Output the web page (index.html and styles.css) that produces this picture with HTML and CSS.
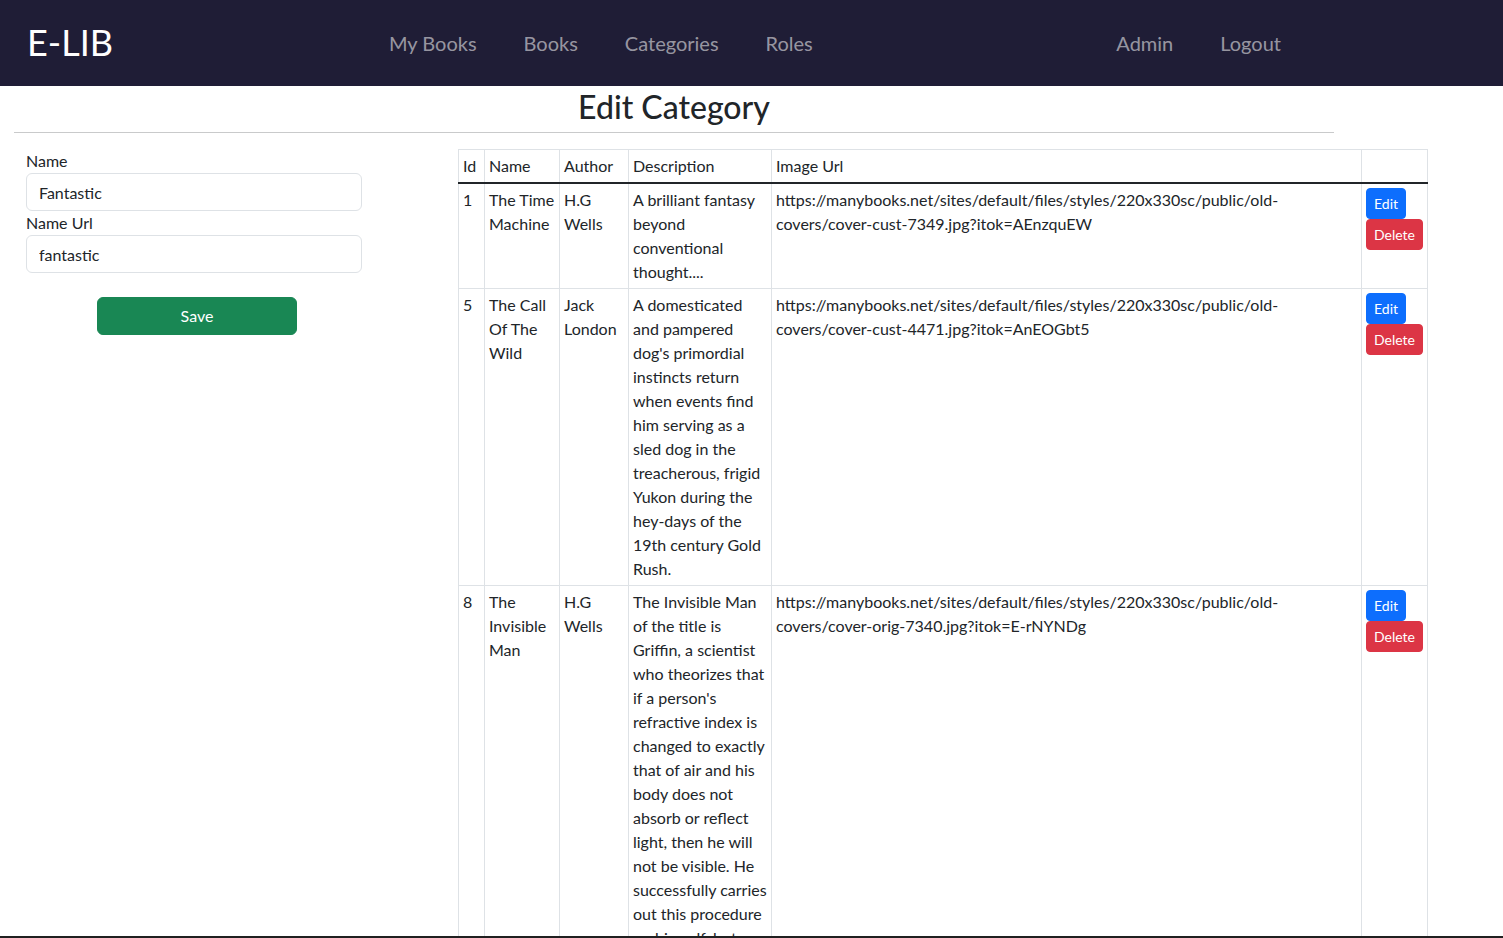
FILE: index.html
```html
<!DOCTYPE html>
<html lang="en">
<head>
<meta charset="utf-8">
<title>E-LIB - Edit Category</title>
<link rel="stylesheet" href="styles.css">
</head>
<body>
<header class="navbar">
  <a class="brand" href="#">E-LIB</a>
  <nav class="nav-main">
    <a class="nav-link" href="#">My Books</a>
    <a class="nav-link" href="#">Books</a>
    <a class="nav-link" href="#">Categories</a>
    <a class="nav-link" href="#">Roles</a>
  </nav>
  <nav class="nav-user">
    <a class="nav-link" href="#">Admin</a>
    <a class="nav-link" href="#">Logout</a>
  </nav>
</header>

<main class="page">
  <div class="title-block">
    <h2 class="title">Edit Category</h2>
    <hr class="divider">
  </div>

  <div class="content">
    <form class="form-col">
      <label class="form-label" for="name">Name</label>
      <input class="form-control" id="name" type="text" value="Fantastic">
      <label class="form-label" for="nameUrl">Name Url</label>
      <input class="form-control" id="nameUrl" type="text" value="fantastic">
      <button class="btn btn-save" type="button">Save</button>
    </form>

    <div class="table-col">
      <table class="table">
        <colgroup>
          <col class="c-id">
          <col class="c-name">
          <col class="c-author">
          <col class="c-desc">
          <col class="c-url">
          <col class="c-act">
        </colgroup>
        <thead>
          <tr>
            <th>Id</th>
            <th>Name</th>
            <th>Author</th>
            <th>Description</th>
            <th>Image Url</th>
            <th></th>
          </tr>
        </thead>
        <tbody>
          <tr>
            <td>1</td>
            <td>The Time Machine</td>
            <td>H.G Wells</td>
            <td>A brilliant fantasy beyond conventional thought....</td>
            <td>https://manybooks.net/sites/default/files/styles/220x330sc/public/old-covers/cover-cust-7349.jpg?itok=AEnzquEW</td>
            <td class="actions"><button class="btn btn-sm btn-edit" type="button">Edit</button><button class="btn btn-sm btn-delete" type="button">Delete</button></td>
          </tr>
          <tr>
            <td>5</td>
            <td>The Call Of The Wild</td>
            <td>Jack London</td>
            <td>A domesticated and pampered dog's primordial instincts return when events find him serving as a sled dog in the treacherous, frigid Yukon during the hey-days of the 19th century Gold Rush.</td>
            <td>https://manybooks.net/sites/default/files/styles/220x330sc/public/old-covers/cover-cust-4471.jpg?itok=AnEOGbt5</td>
            <td class="actions"><button class="btn btn-sm btn-edit" type="button">Edit</button><button class="btn btn-sm btn-delete" type="button">Delete</button></td>
          </tr>
          <tr>
            <td>8</td>
            <td>The Invisible Man</td>
            <td>H.G Wells</td>
            <td>The Invisible Man of the title is Griffin, a scientist who theorizes that if a person's refractive index is changed to exactly that of air and his body does not absorb or reflect light, then he will not be visible. He successfully carries out this procedure on himself, but cannot reverse it.</td>
            <td>https://manybooks.net/sites/default/files/styles/220x330sc/public/old-covers/cover-orig-7340.jpg?itok=E-rNYNDg</td>
            <td class="actions"><button class="btn btn-sm btn-edit" type="button">Edit</button><button class="btn btn-sm btn-delete" type="button">Delete</button></td>
          </tr>
        </tbody>
      </table>
    </div>
  </div>
</main>
<div class="window-edge"></div>
</body>
</html>
```

FILE: styles.css
```css
* { box-sizing: border-box; }

html, body {
  margin: 0;
  padding: 0;
}

body {
  font-family: Lato, "Open Sans", sans-serif;
  font-size: 16px;
  line-height: 1.5;
  color: #212529;
  background: #fff;
}

/* Navbar */
.navbar {
  display: flex;
  align-items: center;
  height: 86px;
  background: #1f1d36;
}

.brand {
  flex: 0 0 362px;
  margin-left: 27px;
  font-size: 36px;
  line-height: 1.2;
  color: #fff;
  text-decoration: none;
}

.nav-main,
.nav-user {
  display: flex;
  align-items: center;
  gap: 47px;
}

.nav-user {
  margin-left: auto;
  padding-right: 222px;
}

.nav-link {
  font-size: 20px;
  line-height: 1.5;
  color: rgba(255, 255, 255, 0.55);
  text-decoration: none;
}

/* Title */
.title-block {
  width: 1320px;
  margin-left: 14px;
}

.title {
  margin: 2px 0 0;
  font-size: 32px;
  font-weight: 500;
  line-height: 1.2;
  text-align: center;
}

.divider {
  margin: 6px 0 16px;
  border: 0;
  border-top: 1px solid #c9cacb;
}

/* Content */
.content {
  display: flex;
  align-items: flex-start;
  padding-left: 26px;
}

.form-col {
  display: flex;
  flex-direction: column;
  width: 336px;
}

.form-label {
  display: block;
  line-height: 24px;
}

.form-control {
  display: block;
  width: 100%;
  height: 38px;
  padding: 6px 12px;
  font-family: inherit;
  font-size: 16px;
  line-height: 1.5;
  color: #212529;
  background: #fff;
  border: 1px solid #dee2e6;
  border-radius: 6px;
  outline: none;
}

.btn {
  font-family: inherit;
  color: #fff;
  border: 1px solid transparent;
  cursor: pointer;
}

.btn-save {
  align-self: flex-start;
  width: 200px;
  height: 38px;
  margin: 24px 0 0 71px;
  font-size: 16px;
  line-height: 1.5;
  background: #198754;
  border-color: #198754;
  border-radius: 6px;
}

.table-col {
  margin-left: 96px;
}

/* Table */
.table {
  width: 969px;
  table-layout: fixed;
  border-collapse: collapse;
  border: 1px solid #dee2e6;
}

.c-id { width: 26px; }
.c-name { width: 75px; }
.c-author { width: 69px; }
.c-desc { width: 143px; }
.c-url { width: 590px; }
.c-act { width: 66px; }

.table th,
.table td {
  padding: 4px;
  border: 1px solid #dee2e6;
  vertical-align: top;
  text-align: left;
  font-weight: 400;
  line-height: 24px;
}

.table thead th {
  border-bottom: 2px solid #212529;
}

.table tbody tr:first-child td {
  border-top: 2px solid #212529;
}

.actions {
  line-height: 0;
}

.btn-sm {
  display: block;
  padding: 4px 7px;
  font-size: 14px;
  line-height: 21px;
  border-radius: 4px;
}

.btn-edit {
  background: #0d6efd;
  border-color: #0d6efd;
}

.btn-delete {
  background: #dc3545;
  border-color: #dc3545;
}

.window-edge {
  position: fixed;
  left: 0;
  right: 0;
  bottom: 0;
  height: 2px;
  background: #202020;
}
```
